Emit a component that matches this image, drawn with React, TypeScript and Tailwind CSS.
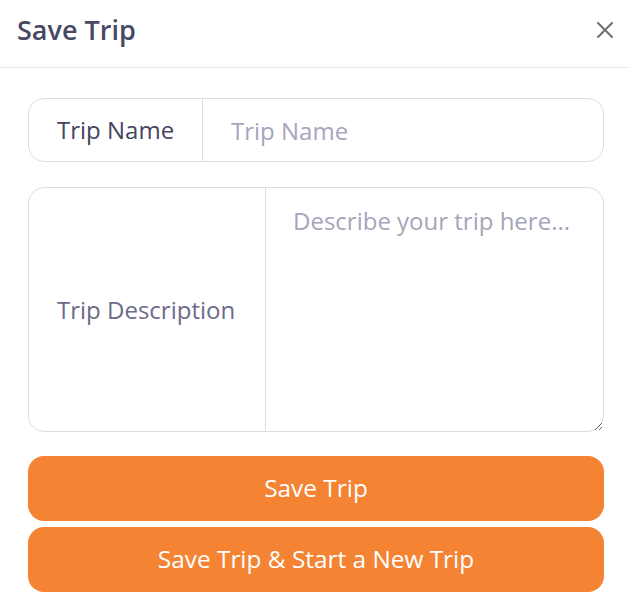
import React from "react";

export default function App() {
  return (
    <div className="w-[629px] h-[601px] bg-white overflow-hidden" style={{ fontFamily: '"Open Sans", sans-serif' }}>
      <div className="h-[68px] flex items-center justify-between pl-[17px] pr-[12px] border-b border-[#e6e6ee]">
        <h1 className="text-[27px] font-semibold text-[#474863] leading-none pb-[8px]">Save Trip</h1>
        <button className="w-6 h-6 flex items-center justify-center text-[#6f6f6f] mb-[8px]" aria-label="Close">
          <svg width="18" height="18" viewBox="0 0 18 18" fill="none" stroke="currentColor" strokeWidth="2" strokeLinecap="round">
            <path d="M2 2 L16 16 M16 2 L2 16" />
          </svg>
        </button>
      </div>
      <div className="pt-[30px] pl-[28px] pr-[25px] flex flex-col">
        <div className="h-[64px] flex rounded-2xl border border-[#dddce9] overflow-hidden">
          <div className="w-[174px] flex items-center pl-[28px] border-r border-[#dddce9] text-[24px] text-[#45455f]">Trip Name</div>
          <input
            className="flex-1 px-[28px] pt-[2px] text-[24px] text-[#45455f] placeholder:text-[#a6a5bb] outline-none bg-transparent"
            placeholder="Trip Name"
          />
        </div>
        <div className="mt-[25px] h-[245px] flex rounded-2xl border border-[#dddce9]">
          <div className="w-[237px] flex items-center pl-[28px] border-r border-[#dddce9] text-[24px] text-[#6c6b88]">Trip Description</div>
          <textarea
            className="flex-1 h-full px-[27px] pt-[15px] text-[24px] leading-[36px] text-[#45455f] placeholder:text-[#a6a5bb] outline-none bg-transparent resize"
            placeholder="Describe your trip here..."
          />
        </div>
        <button className="mt-[24px] h-[65px] rounded-2xl bg-[#f48333] text-white text-[24.4px] font-medium flex items-center justify-center">
          Save Trip
        </button>
        <button className="mt-[6px] h-[65px] rounded-2xl bg-[#f48333] text-white text-[24.4px] font-medium flex items-center justify-center">
          Save Trip &amp; Start a New Trip
        </button>
      </div>
    </div>
  );
}
